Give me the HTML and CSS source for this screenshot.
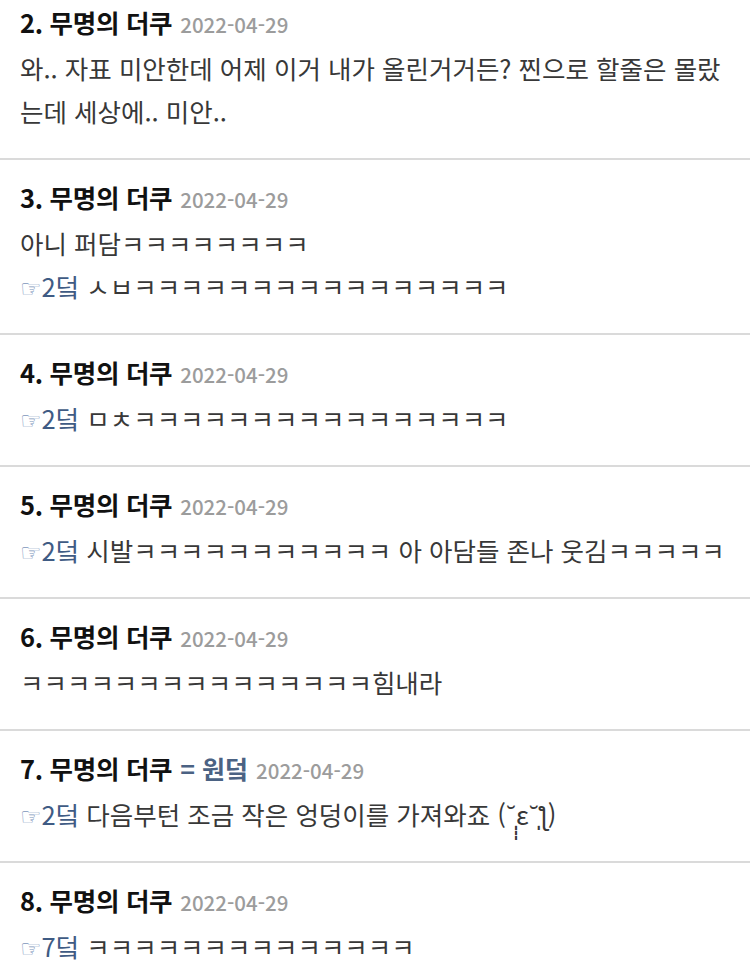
FILE: index.html
```html
<!DOCTYPE html>
<html lang="ko">
<head>
    <meta charset="UTF-8">
    <meta name="viewport" content="width=device-width, initial-scale=1.0">
    <title>댓글</title>
    <link rel="stylesheet" href="styles.css">
</head>
<body>

    <ul class="comments">
        <li class="comment">
            <div class="comment-head">
                <span class="name">2. 무명의 더쿠</span>
                <span class="date">2022-04-29</span>
            </div>
            <p class="comment-body">와.. 자표 미안한데 어제 이거 내가 올린거거든? 찐으로 할줄은 몰랐는데 세상에.. 미안..</p>
        </li>
        <li class="comment">
            <div class="comment-head">
                <span class="name">3. 무명의 더쿠</span>
                <span class="date">2022-04-29</span>
            </div>
            <p class="comment-body">아니 퍼담ㅋㅋㅋㅋㅋㅋㅋㅋ</p>
            <p class="comment-body"><a class="reply" href="#"><span class="hand">☞</span>2덬</a> ㅅㅂㅋㅋㅋㅋㅋㅋㅋㅋㅋㅋㅋㅋㅋㅋㅋㅋ</p>
        </li>
        <li class="comment">
            <div class="comment-head">
                <span class="name">4. 무명의 더쿠</span>
                <span class="date">2022-04-29</span>
            </div>
            <p class="comment-body"><a class="reply" href="#"><span class="hand">☞</span>2덬</a> ㅁㅊㅋㅋㅋㅋㅋㅋㅋㅋㅋㅋㅋㅋㅋㅋㅋㅋ</p>
        </li>
        <li class="comment">
            <div class="comment-head">
                <span class="name">5. 무명의 더쿠</span>
                <span class="date">2022-04-29</span>
            </div>
            <p class="comment-body"><a class="reply" href="#"><span class="hand">☞</span>2덬</a> 시발ㅋㅋㅋㅋㅋㅋㅋㅋㅋㅋㅋ 아 아담들 존나 웃김ㅋㅋㅋㅋㅋ</p>
        </li>
        <li class="comment">
            <div class="comment-head">
                <span class="name">6. 무명의 더쿠</span>
                <span class="date">2022-04-29</span>
            </div>
            <p class="comment-body">ㅋㅋㅋㅋㅋㅋㅋㅋㅋㅋㅋㅋㅋㅋㅋ힘내라</p>
        </li>
        <li class="comment">
            <div class="comment-head">
                <span class="name">7. 무명의 더쿠</span>
                <span class="op">= 원덬</span>
                <span class="date">2022-04-29</span>
            </div>
            <p class="comment-body"><a class="reply" href="#"><span class="hand">☞</span>2덬</a> 다음부턴 조금 작은 엉덩이를 가져와죠 (˘̩̩̩ε˘̩ƪ)</p>
        </li>
        <li class="comment">
            <div class="comment-head">
                <span class="name">8. 무명의 더쿠</span>
                <span class="date">2022-04-29</span>
            </div>
            <p class="comment-body"><a class="reply" href="#"><span class="hand">☞</span>7덬</a> ㅋㅋㅋㅋㅋㅋㅋㅋㅋㅋㅋㅋㅋㅋ</p>
        </li>
    </ul>

</body>
</html>
```

FILE: styles.css
```css
body {
    margin: 0;
    background-color: #fff;
    font-family: "Noto Sans CJK KR", "Noto Sans", sans-serif;
    color: #333;
    overflow: hidden;
}

.comments {
    list-style: none;
    margin: -17px 0 0 0;
    padding: 0;
}

.comment {
    border-top: 2px solid #dadada;
    padding: 17px 20px 26px;
}

.comment-head {
    display: flex;
    align-items: baseline;
    gap: 8px;
    height: 40px;
    line-height: 40px;
    margin-bottom: 4px;
}

.name {
    font-size: 25.5px;
    font-weight: 700;
    color: #111;
    letter-spacing: -0.3px;
}

.op {
    font-size: 25px;
    font-weight: 700;
    color: #4b6283;
}

.date {
    font-size: 20.5px;
    font-weight: 500;
    color: #9c9c9c;
}

.comment-body {
    margin: 0;
    font-size: 25.5px;
    line-height: 43px;
    color: #383838;
}

.reply {
    color: #3f5b84;
    text-decoration: none;
}

.hand {
    font-family: "DejaVu Sans", sans-serif;
    font-size: 24px;
    line-height: 20px;
    color: #7d95bb;
}
```
